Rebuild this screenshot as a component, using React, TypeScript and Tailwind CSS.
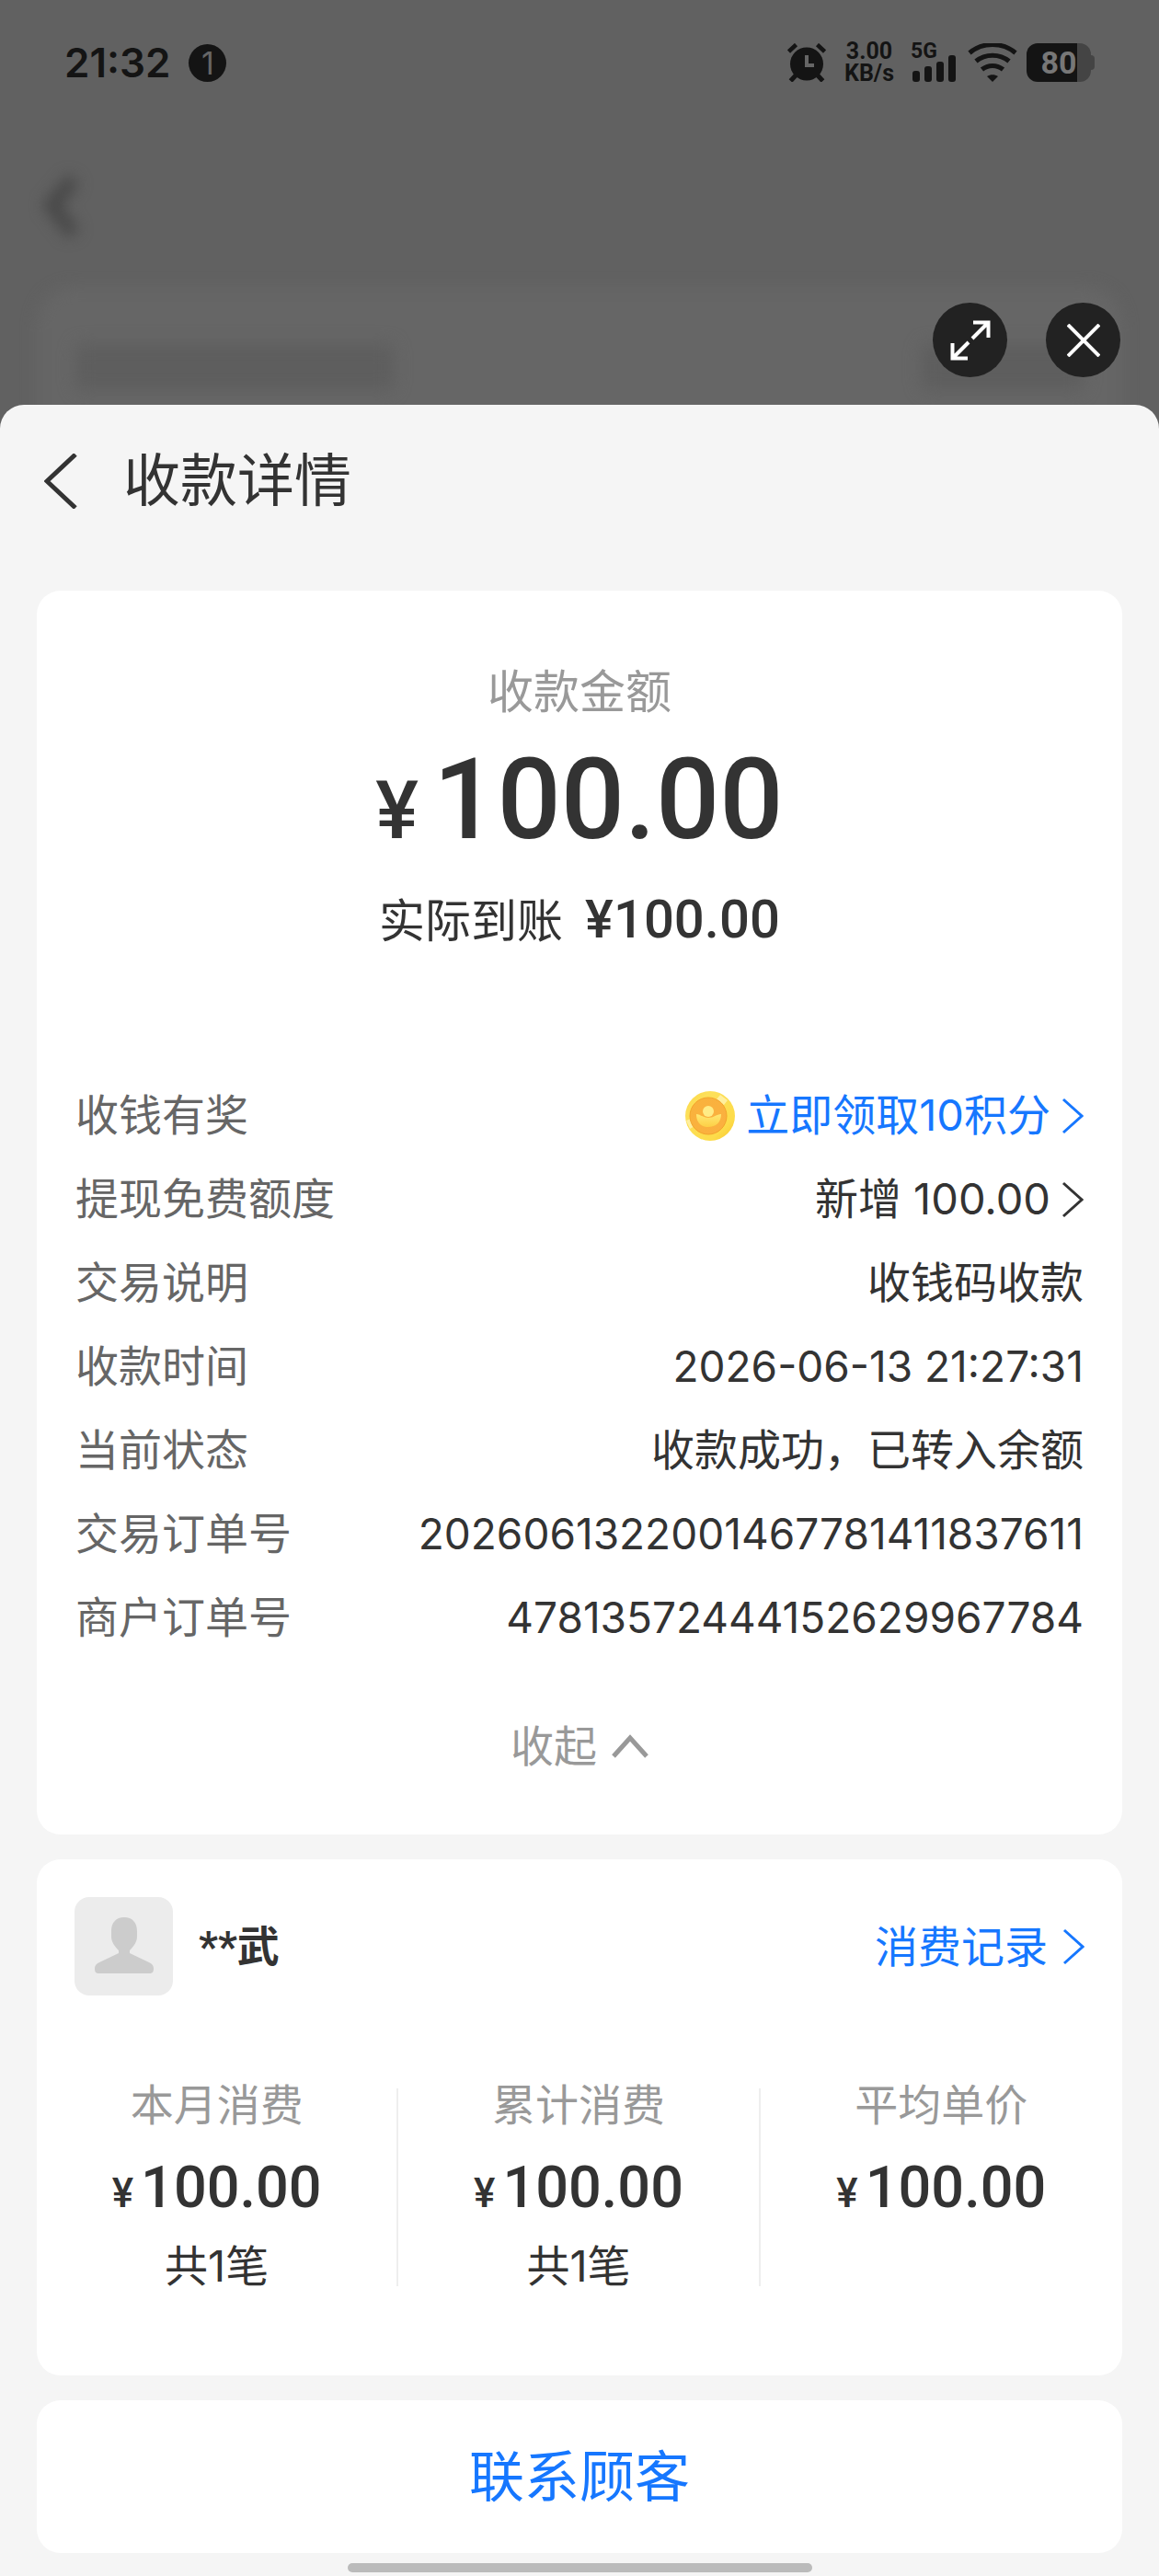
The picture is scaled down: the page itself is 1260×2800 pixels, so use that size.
import type { ReactNode } from "react"

const details: { label: string; value: string; kind: "reward" | "link" | "text" | "number" }[] = [
  { label: "收钱有奖", value: "立即领取10积分", kind: "reward" },
  { label: "提现免费额度", value: "新增 100.00", kind: "link" },
  { label: "交易说明", value: "收钱码收款", kind: "text" },
  { label: "收款时间", value: "2026-06-13 21:27:31", kind: "number" },
  { label: "当前状态", value: "收款成功，已转入余额", kind: "text" },
  { label: "交易订单号", value: "2026061322001467781411837611", kind: "number" },
  { label: "商户订单号", value: "47813572444152629967784", kind: "number" },
]

const stats = [
  { label: "本月消费", amount: "100.00", count: "共1笔" },
  { label: "累计消费", amount: "100.00", count: "共1笔" },
  { label: "平均单价", amount: "100.00", count: "" },
]

function ChevronRight() {
  return (
    <svg width="24" height="40" viewBox="0 0 24 40" fill="none" stroke="currentColor" strokeWidth="3" aria-hidden="true">
      <path d="M2 2l20 18L2 38" />
    </svg>
  )
}

function Coin() {
  return (
    <svg width="54" height="54" viewBox="0 0 54 54" aria-hidden="true">
      <defs>
        <linearGradient id="coinRim" x1="0" y1="0" x2="1" y2="1">
          <stop offset="0" stopColor="#fbd443" />
          <stop offset="0.25" stopColor="#fde05a" />
          <stop offset="0.75" stopColor="#fddc4a" />
          <stop offset="1" stopColor="#f9c62e" />
        </linearGradient>
        <linearGradient id="coinFace" x1="0" y1="0" x2="1" y2="1">
          <stop offset="0" stopColor="#f9b23c" />
          <stop offset="1" stopColor="#fbb040" />
        </linearGradient>
        <linearGradient id="ingot" x1="0" y1="0" x2="0" y2="1">
          <stop offset="0" stopColor="#ffe873" />
          <stop offset="1" stopColor="#fdcf45" />
        </linearGradient>
      </defs>
      <circle cx="27" cy="27" r="27" fill="url(#coinRim)" />
      <path d="M38 4l8 6-4 5-8-6zM1 32l5-2 4 8-5 3z" fill="#fff3b0" opacity="0.8" />
      <circle cx="25" cy="27" r="20" fill="url(#coinFace)" stroke="#f3a42c" strokeWidth="1" />
      <circle cx="25" cy="22" r="6" fill="#ffec86" />
      <path d="M12 25c4 0 7 4 13 4s9-4 14-4c0 9-6 14-14 14s-13-5-13-14z" fill="url(#ingot)" />
    </svg>
  )
}

function StatusBar() {
  return (
    <header className="flex items-center justify-between pt-[47px] pl-[70px] pr-[70px] text-[#141414]">
      <div className="flex items-center gap-5">
        <span className="text-[44px] leading-[42px] font-semibold">21:32</span>
        <span className="flex h-[41px] w-[41px] items-center justify-center rounded-full bg-[#141414] text-[34px] leading-[41px] text-[#666]">
          1
        </span>
      </div>
      <div className="flex h-[42px] items-center">
        <svg width="42" height="42" viewBox="0 0 42 42" className="mr-[20px]" aria-hidden="true">
          <g stroke="#141414" fill="none">
            <path d="M1.500 9l8-7.500M40.500 9l-8-7.500" strokeWidth="4.500" />
            <path d="M9 35l-5.500 6M33 35l5.500 6" strokeWidth="5" />
          </g>
          <circle cx="21" cy="22.500" r="18" fill="#141414" />
          <path d="M21 13v11h8" stroke="#666" strokeWidth="4" fill="none" />
        </svg>
        <div className="mr-[18px] flex w-[54px] flex-col items-center font-['Roboto',sans-serif] text-[25px] leading-6 font-bold">
          <span>3.00</span>
          <span>KB/s</span>
        </div>
        <div className="mr-3 flex h-[42px] w-[50px] flex-col">
          <span className="h-[18px] font-['Roboto',sans-serif] text-[23px] leading-[18px] font-bold">5G</span>
          <svg width="50" height="42" viewBox="0 0 50 42" className="-mt-[18px]" aria-hidden="true">
            <g fill="#141414">
              <rect x="2" y="30" width="8" height="12" rx="3" />
              <rect x="15" y="25" width="8" height="17" rx="3" />
              <rect x="28" y="20" width="8" height="22" rx="3" />
              <rect x="41" y="13" width="8" height="29" rx="3" />
            </g>
          </svg>
        </div>
        <svg width="54" height="42" viewBox="0 0 54 42" className="mr-[10px]" aria-hidden="true">
          <g fill="none" stroke="#141414" strokeWidth="5">
            <path d="M2 10.500C16 -1.500 38 -1.500 52 10.500" />
            <path d="M9 19.500C19 11 35 11 45 19.500" />
            <path d="M15.500 28.500C22 23 32 23 38.500 28.500" />
          </g>
          <path d="M21 36c3.500-2.500 8.500-2.500 12 0l-6 6z" fill="#141414" />
        </svg>
        <div className="flex h-[42px] items-center">
          <div className="flex h-[42px] w-[70px] items-center justify-center rounded-xl bg-linear-to-r from-[#141414] from-78% to-[#444] to-78% text-[#777]">
            <span className="font-['Roboto',sans-serif] text-[34px] leading-[42px] font-bold">80</span>
          </div>
          <div className="h-4 w-1 rounded-r-sm bg-[#444]" />
        </div>
      </div>
    </header>
  )
}

// 弹层后面的模糊页面
function Backdrop() {
  return (
    <div className="absolute inset-x-0 top-0 h-[500px] overflow-hidden" aria-hidden="true">
      <svg width="110" height="130" viewBox="0 0 110 130" fill="none" className="absolute top-[160px] left-[14px] blur-[8px]">
        <path d="M66 35L42 63l24 31" stroke="#464646" strokeWidth="15" />
      </svg>
      <div className="absolute inset-x-10 top-[312px] h-[300px] rounded-[40px] bg-[#666] blur-[8px]" />
      <div className="absolute top-[374px] left-[82px] h-[50px] w-[346px] rounded-lg bg-[#5e5e5e] blur-[9px]" />
      <div className="absolute top-[374px] right-[82px] h-[50px] w-[176px] rounded-lg bg-[#5e5e5e] blur-[9px]" />
    </div>
  )
}

function Card({ className, children }: { className: string; children: ReactNode }) {
  return <section className={`rounded-[26px] bg-white ${className}`}>{children}</section>
}

function DetailValue({ value, kind }: { value: string; kind: string }) {
  if (kind === "reward") {
    return (
      <a href="#reward" className="flex items-center gap-3 text-[#1677ff]">
        <Coin />
        <span>{value}</span>
        <ChevronRight />
      </a>
    )
  }
  if (kind === "link") {
    return (
      <a href="#quota" className="flex items-center gap-3">
        <span>{value}</span>
        <ChevronRight />
      </a>
    )
  }
  return <span className={kind === "number" ? "text-[46px]" : ""}>{value}</span>
}

export default function App() {
  return (
    <div className="relative flex min-h-screen flex-col bg-[#616161] font-['Inter','Noto_Sans_CJK_SC',sans-serif] text-[47px] text-[#333]">
      <Backdrop />

      <div className="relative">
        <StatusBar />
        <div className="mt-[240px] flex justify-end gap-[42px] pr-[42px]">
          <button aria-label="全屏" className="flex h-[81px] w-[81px] items-center justify-center rounded-full bg-[#222]">
            <svg width="44" height="44" viewBox="0 0 44 44" fill="none" stroke="#fff" strokeWidth="4" aria-hidden="true">
              <path d="M25 2.500h16.500V19M41 3L24 20M2.500 25v16.500H19M3 41l17-17" />
            </svg>
          </button>
          <button aria-label="关闭" className="flex h-[81px] w-[81px] items-center justify-center rounded-full bg-[#222]">
            <svg width="36" height="36" viewBox="0 0 36 36" fill="none" stroke="#fff" strokeWidth="4" aria-hidden="true">
              <path d="M1 1l34 34M35 1L1 35" />
            </svg>
          </button>
        </div>
      </div>

      <main className="relative mt-[30px] flex-1 rounded-t-[26px] bg-[#f5f5f5] px-10">
        <div className="mb-9 flex h-[166px] items-center">
          <button aria-label="返回" className="ml-2 mr-[50px]">
            <svg width="36" height="60" viewBox="0 0 36 60" fill="none" stroke="#333" strokeWidth="5" aria-hidden="true">
              <path d="M34 1L3 30l31 29" />
            </svg>
          </button>
          <h1 className="text-[62px] leading-[62px]">收款详情</h1>
        </div>

        <div className="flex flex-col gap-[27px]">
          {/* 收款金额与明细 */}
          <Card className="flex flex-col px-[42px] pt-20 pb-[66px]">
            <p className="text-center text-[50px] leading-[60px] text-[#999]">收款金额</p>
            <p className="mt-7 flex items-baseline justify-center gap-4 font-['Roboto',sans-serif] leading-[120px] font-medium">
              <span className="text-[88px] leading-none">¥</span>
              <span className="text-[122px]">100.00</span>
            </p>
            <p className="mt-10 flex items-baseline justify-center gap-6 leading-[60px]">
              <span className="text-[50px]">实际到账</span>
              <span className="font-['Roboto',sans-serif] text-[58px] leading-none font-medium">¥100.00</span>
            </p>

            <dl className="mt-[136px]">
              {details.map((item) => (
                <div key={item.label} className="flex h-[91px] items-center justify-between">
                  <dt className="text-[#666]">{item.label}</dt>
                  <dd>
                    <DetailValue value={item.value} kind={item.kind} />
                  </dd>
                </div>
              ))}
            </dl>

            <button className="mt-16 flex h-[60px] items-center gap-4 self-center leading-[60px] text-[#999]">
              收起
              <svg width="40" height="26" viewBox="0 0 40 26" fill="none" stroke="currentColor" strokeWidth="5" aria-hidden="true">
                <path d="M2 24L20 4l18 20" />
              </svg>
            </button>
          </Card>

          {/* 顾客消费统计 */}
          <Card className="pt-[41px] pb-[97px]">
            <div className="flex h-[107px] items-center px-[41px]">
              <svg width="107" height="107" viewBox="0 0 107 107" className="mr-7" aria-hidden="true">
                <rect width="107" height="107" rx="16" fill="#ececec" />
                <path
                  d="M54 22c9 0 14 6 14 15v6c0 6-4 11-8 15v3l21 10c4 2 5 4 5 7s-1 5-5 5H27c-4 0-5-2-5-5s1-5 5-7l21-10v-3c-4-4-8-9-8-15v-6c0-9 5-15 14-15z"
                  fill="#ccc"
                />
              </svg>
              <span className="flex-1 font-['Roboto','Noto_Sans_CJK_SC',sans-serif] text-[46px] leading-[60px] font-bold">**武</span>
              <a href="#records" className="flex items-center gap-4 leading-[60px] text-[#1677ff]">
                消费记录
                <ChevronRight />
              </a>
            </div>
            <div className="mt-[101px] grid grid-cols-3 divide-x-2 divide-[#eee] text-center">
              {stats.map((item) => (
                <div key={item.label}>
                  <p className="leading-9 text-[#999]">{item.label}</p>
                  <p className="mt-9 flex items-baseline justify-center gap-2 font-['Roboto',sans-serif] leading-[72px] font-medium">
                    <span className="text-[44px] leading-none">¥</span>
                    <span className="text-[63px]">{item.amount}</span>
                  </p>
                  {item.count && <p className="mt-[27px] leading-[44px]">{item.count}</p>}
                </div>
              ))}
            </div>
          </Card>

          <button className="h-[166px] rounded-[26px] bg-white text-[60px] leading-[60px] text-[#1677ff]">联系顾客</button>
        </div>

        <div className="mx-auto mt-[11px] mb-[3px] h-[10px] w-[505px] rounded-full bg-[#bbb]" />
      </main>
    </div>
  )
}
